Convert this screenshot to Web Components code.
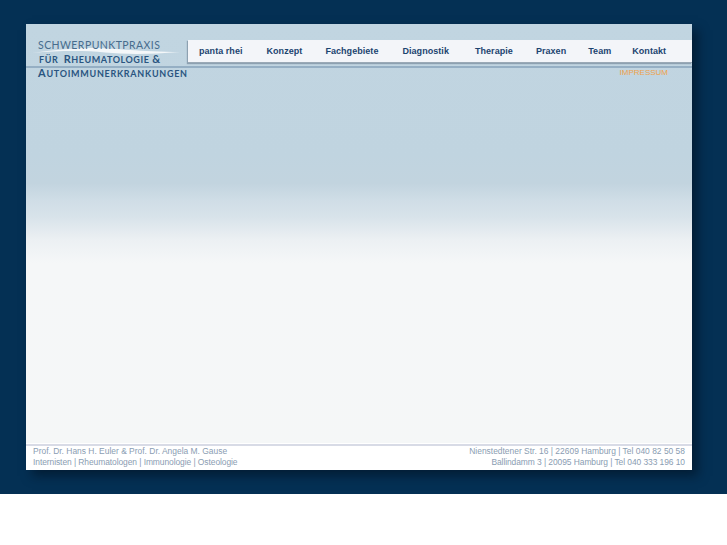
<!DOCTYPE html>
<html lang="de">
<head>
<meta charset="utf-8">
<title>Schwerpunktpraxis</title>
<style>
  html, body { margin: 0; background: #fff; }
  body { font-family: "Liberation Sans", Arial, sans-serif; }
  .tight { letter-spacing: -.07px; }
</style>
</head>
<body>
<site-stage>
  <site-header></site-header>
  <site-footer>
    <span slot="left">Prof. Dr. Hans H. Euler &amp; Prof. Dr. Angela M. Gause</span>
    <span slot="left" class="tight">Internisten | Rheumatologen | Immunologie | Osteologie</span>
    <span slot="right">Nienstedtener Str. 16 | 22609 Hamburg | Tel 040 82 50 58</span>
    <span slot="right" class="tight">Ballindamm 3 | 20095 Hamburg | Tel 040 333 196 10</span>
  </site-footer>
</site-stage>

<script>
class SiteStage extends HTMLElement {
  constructor() {
    super();
    this.attachShadow({ mode: 'open' }).innerHTML = `
      <style>
        :host { display: block; height: 494px; box-sizing: border-box; padding: 24px 35px 24px 26px; background: #043054; }
        .panel {
          height: 446px;
          display: flex;
          flex-direction: column;
          box-shadow: 6px 6px 10px rgba(0, 15, 30, .55);
          background: linear-gradient(#c1d5e1 0, #c0d4e0 130px, #c2d4df 159px, #cfdde6 176px, #d8e3ea 193px, #ecf0f3 216px, #f5f7f8 239px, #f5f7f7 100%);
        }
      </style>
      <div class="panel"><slot></slot></div>`;
  }
}

class SiteHeader extends HTMLElement {
  constructor() {
    super();
    this.attachShadow({ mode: 'open' }).innerHTML = `
      <style>
        :host {
          display: flex;
          flex: 1;
          align-items: flex-start;
          /* rule under the menu runs behind the logo too */
          background: linear-gradient(#95afc4, #95afc4) 0 42px / 100% 2px no-repeat;
        }
      </style>
      <site-logo></site-logo>
      <site-nav></site-nav>`;
  }
}

class SiteLogo extends HTMLElement {
  constructor() {
    super();
    this.attachShadow({ mode: 'open' }).innerHTML = `
      <style>
        :host {
          display: block;
          position: relative;
          width: 162px;
          flex: none;
          box-sizing: border-box;
          padding: 15px 0 0 12px;
          font-family: Lato, "Open Sans", sans-serif;
          white-space: nowrap;
        }
        div { position: relative; height: 14px; line-height: 14px; }
        .one { font-size: 10.5px; letter-spacing: .44px; color: #466c8d; height: 13px; line-height: 13px; }
        .two, .three { font-weight: 700; color: #2a5580; font-size: 9px; letter-spacing: .72px; }
        .two { letter-spacing: .55px; padding-left: 1px; }
        b { font-size: 11px; font-weight: 700; }
        svg { position: absolute; left: 0; top: 20px; }
      </style>
      <svg width="160" height="12" viewBox="0 0 160 12"><path d="M6 9C29 6 49 3.5 69 4C89 4.5 114 7.5 154 8C124 10.5 99 10.5 79 8.5C59 6.5 34 6.5 6 9Z" fill="#f4f7f9"/></svg>
      <div class="one">SCHWERPUNKTPRAXIS</div>
      <div class="two">FÜR &nbsp;<b>R</b>HEUMATOLOGIE <b>&amp;</b></div>
      <div class="three"><b>A</b>UTOIMMUNERKRANKUNGEN</div>`;
  }
}

class SiteNav extends HTMLElement {
  constructor() {
    super();
    // gaps between the menu words are not even in the original
    const items = [['panta rhei', 0], ['Konzept', 24], ['Fachgebiete', 23], ['Diagnostik', 24], ['Therapie', 26], ['Praxen', 23], ['Team', 22], ['Kontakt', 21]];
    this.attachShadow({ mode: 'open' }).innerHTML = `
      <style>
        :host { display: block; flex: 1; margin-top: 16px; }
        .bar {
          display: flex;
          align-items: center;
          height: 23px;
          box-sizing: border-box;
          padding: 0 0 0 11px;
          background: #f3f5f9;
          border-bottom: 1px solid #9aa9b6;
          box-shadow: -1px 1px 1px rgba(90, 110, 130, .5);
        }
        a { font: bold 9px "Liberation Sans", Arial, sans-serif; letter-spacing: .05px; color: #1c4470; text-decoration: none; }
        .sub { text-align: right; padding: 5px 24px 0 0; font: 8px/10px "Liberation Sans", Arial, sans-serif; color: #efa24a; }
      </style>
      <div class="bar">${items.map(([t, gap]) => `<a href="#" style="margin-left:${gap}px">${t}</a>`).join('')}</div>
      <div class="sub">IMPRESSUM</div>`;
  }
}

class SiteFooter extends HTMLElement {
  constructor() {
    super();
    this.attachShadow({ mode: 'open' }).innerHTML = `
      <style>
        :host {
          display: flex;
          justify-content: space-between;
          height: 26px;
          box-sizing: border-box;
          padding: 0 7px;
          background: #fff;
          border-top: 2px solid #d8dbe6;
          box-shadow: 0 -1px #fff;
          font-size: 8.45px;
          line-height: 11px;
          color: #8a9db2;
        }
        .col { display: flex; flex-direction: column; }
        .r { text-align: right; }
      </style>
      <div class="col"><slot name="left"></slot></div>
      <div class="col r"><slot name="right"></slot></div>`;
  }
}

customElements.define('site-stage', SiteStage);
customElements.define('site-logo', SiteLogo);
customElements.define('site-nav', SiteNav);
customElements.define('site-header', SiteHeader);
customElements.define('site-footer', SiteFooter);
</script>
</body>
</html>
